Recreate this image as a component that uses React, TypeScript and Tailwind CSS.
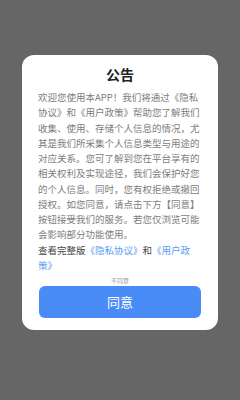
export default function App() {
  const font = { fontFamily: '"Noto Sans CJK SC", "Noto Sans", sans-serif' };
  return (
    <div className="w-[240px] h-[400px] bg-[#666666] pt-[55px] px-[22px]" style={font}>
      <div className="bg-white rounded-[12px] px-[16px] pt-[9px] pb-[12px]">
        <h2 className="text-center text-[14px] leading-[20px] font-bold text-[#222]">公告</h2>
        <div className="mt-[6px] text-[9.5px] leading-[15.25px] text-[#7d7d7d]">
          <p>
            欢迎您使用本APP！我们将通过《隐私协议》和《用户政策》帮助您了解我们收集、使用、存储个人信息的情况，尤其是我们所采集个人信息类型与用途的对应关系。您可了解到您在平台享有的相关权利及实现途径，我们会保护好您的个人信息。同时，您有权拒绝或撤回授权。如您同意，请点击下方【同意】按钮接受我们的服务。若您仅浏览可能会影响部分功能使用。
          </p>
          <p className="text-[#444]">
            <span>查看完整版</span>
            <span className="text-[#5a9cf0]">《隐私协议》</span>
            <span>和</span>
            <span className="text-[#5a9cf0]">《用户政</span>
            <br />
            <span className="text-[#5a9cf0]">策》</span>
          </p>
        </div>
        <div className="mt-[3px] text-center text-[6px] leading-[10px] text-[#999]">不同意</div>
        <div className="px-px">
          <button className="w-full h-[32px] rounded-[6px] bg-[#4a8cf6] text-white text-[13px]">
            同意
          </button>
        </div>
      </div>
    </div>
  );
}
